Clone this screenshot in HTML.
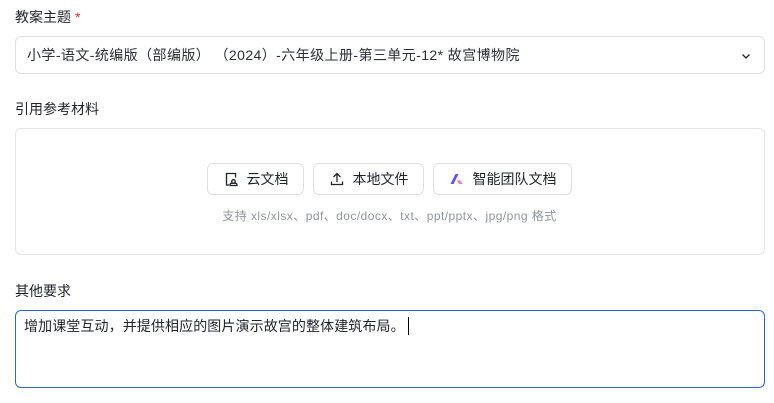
<!DOCTYPE html>
<html><head><meta charset="utf-8"><style>
*{box-sizing:border-box;margin:0;padding:0}
body{width:774px;height:403px;background:#fff;font-family:"Liberation Sans","Noto Sans CJK SC",sans-serif;color:#1f2329;position:relative;overflow:hidden}
.lbl{position:absolute;left:15px;font-size:14px;line-height:20px;color:#1f2329}
.star{color:#e22;margin-left:4px}
.sel{position:absolute;left:15px;top:36px;width:750px;height:38px;border:1px solid #dcdfe4;border-radius:6px;font-size:14px;line-height:36px;padding-left:11px;color:#2b2f36;letter-spacing:0.42px}
.sel svg{position:absolute;right:12px;top:13px}
.drop{position:absolute;left:15px;top:128px;width:750px;height:127px;border:1px solid #e3e5e8;border-radius:6px}
.btn{position:absolute;top:163px;height:32px;border:1px solid #dcdfe4;border-radius:6px;font-size:14px;line-height:30px;display:flex;align-items:center;justify-content:center;gap:8px;color:#1f2329}
.hint{position:absolute;left:0;width:774px;text-align:center;top:208px;font-size:12px;line-height:17px;color:#8f959e;padding-left:5px;letter-spacing:0.45px}
.ta{position:absolute;left:15px;top:310px;width:750px;height:78px;border:1px solid #2b63d9;border-radius:6px;font-size:14px;line-height:20px;padding:5px 8px;letter-spacing:0.1px}
.cur{display:inline-block;width:1px;height:18px;background:#000;vertical-align:-4px;margin-left:3px}
</style></head><body>
<div class="lbl" style="top:7px">教案主题<span class="star">*</span></div>
<div class="sel">小学-语文-统编版（部编版） （2024）-六年级上册-第三单元-12* 故宫博物院
<svg width="12" height="12" viewBox="0 0 12 12"><path d="M2.5 4.5L6 8L9.5 4.5" fill="none" stroke="#1f2329" stroke-width="1.3"/></svg></div>
<div class="lbl" style="top:99px">引用参考材料</div>
<div class="drop"></div>
<div class="btn" style="left:207px;width:97px"><svg width="16" height="16" viewBox="0 0 16 16" fill="none" stroke="#1f2329" stroke-width="1.3"><path d="M6 14H3.5V2.5h9v4"/><circle cx="10.5" cy="10.5" r="1.8"/><path d="M7 14.5v-.8a2 2 0 0 1 2-1.5h3a2 2 0 0 1 2 1.5v.8z"/></svg>云文档</div>
<div class="btn" style="left:313px;width:111px"><svg width="16" height="16" viewBox="0 0 16 16" fill="none" stroke="#1f2329" stroke-width="1.3"><path d="M8 11V2.5M4.5 6L8 2.5 11.5 6M2.5 10.5v3h11v-3"/></svg>本地文件</div>
<div class="btn" style="left:433px;width:139px"><svg width="16" height="16" viewBox="0 0 16 16"><defs><linearGradient id="g" x1="0" x2="1"><stop offset="0" stop-color="#3a5cff"/><stop offset="1" stop-color="#7a3cff"/></linearGradient><linearGradient id="h" x1="0" x2="1"><stop offset="0" stop-color="#ff5fa0"/><stop offset="1" stop-color="#ff9ec8"/></linearGradient></defs><path d="M1.5 13L6.5 3h3L4.5 13z" fill="url(#g)"/><path d="M8 9.5h3.5L14 13h-4z" fill="url(#h)"/></svg>智能团队文档</div>
<div class="hint">支持 xls/xlsx、pdf、doc/docx、txt、ppt/pptx、jpg/png 格式</div>
<div class="lbl" style="top:281px">其他要求</div>
<div class="ta">增加课堂互动，并提供相应的图片演示故宫的整体建筑布局。<span class="cur"></span></div>
</body></html>
